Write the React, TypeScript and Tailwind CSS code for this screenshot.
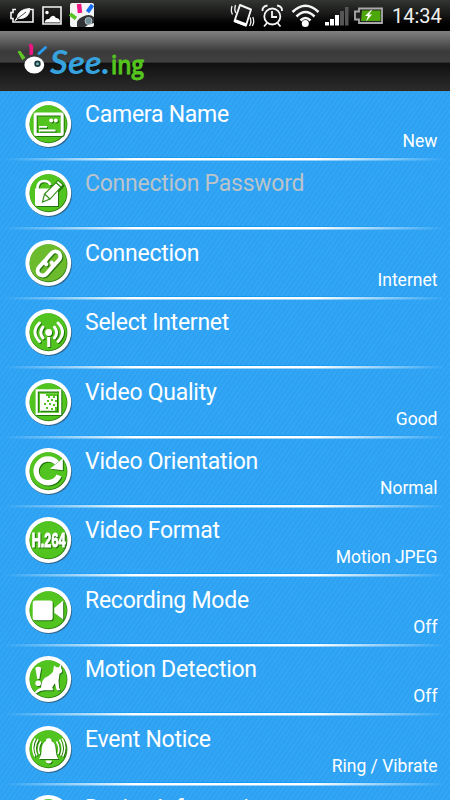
import React from "react";

interface Setting {
  title: string;
  value?: string;
  icon: React.ReactNode;
  disabled?: boolean;
  fill?: string;
}

const GREEN = "#52c41f";

const settings: Setting[] = [
  {
    title: "Camera Name",
    value: "New",
    icon: (
      <>
        <rect x="10.2" y="13" width="27" height="20.5" rx="1" fill="none" stroke="#fff" strokeWidth="3" />
        <circle cx="26.2" cy="19.5" r="2" />
        <circle cx="30.8" cy="19.5" r="2" />
        <path d="M14 25h8v1.7h-8zM14 28.6h16.5v1.8H14z" />
      </>
    ),
  },
  {
    title: "Connection Password",
    disabled: true,
    icon: (
      <>
        <path d="M12.5 19v-2q1-6 6.5-6 5 0 6.5 4" fill="none" stroke="#fff" strokeWidth="2.7" />
        <path d="M10 18.5h23V36H12q-2 0-2-2z" />
        <g stroke="#2f8d12" strokeWidth="1.1">
          <path d="M17.5 32l2-8L31 12.5l5 4.5L25 29z" />
          <path d="M31 12.5l2-2.2 5 4.5-2 2.2z" />
          <path d="M19.5 24l5.5 5" fill="none" />
        </g>
      </>
    ),
  },
  {
    title: "Connection",
    value: "Internet",
    fill: "#6cbb2c",
    icon: (
      <g transform="rotate(-48 24 23.5)" fill="none" stroke="#fff" strokeWidth="4" strokeLinecap="round">
        <path d="M22.5 18.5h-8a5 5 0 0 0 0 10h7q5 0 5-3.5" />
        <path d="M25.5 28.5h8a5 5 0 0 0 0-10h-7q-5 0-5 3.5" />
      </g>
    ),
  },
  {
    title: "Select Internet",
    icon: (
      <>
        <circle cx="23.7" cy="23.5" r="3.4" />
        <path d="M22.2 28h3v10h-3z" />
        <g fill="none" stroke="#fff" strokeWidth="2.9" strokeLinecap="round">
          <path d="M18 18q-4.5 5.5 0 11M29.4 18q4.5 5.5 0 11M14.5 14q-9 9 0 18.5M33 14q9 9 0 18.5" />
        </g>
      </>
    ),
  },
  {
    title: "Video Quality",
    value: "Good",
    icon: (
      <>
        <rect x="11.7" y="11.4" width="23.5" height="23.5" fill="none" stroke="#fff" strokeWidth="2.2" />
        <path d="M15 14.8h17v17H15z" />
        <path
          fill={GREEN}
          d="M21 15h11v2h-2v2h-2v-2h-3v2h-2v-2h-2zM22 21h2v2h-2zM26 20h2v2h-2zM30 21h2v2h-2zM19 24h2v2h-2zM24 24h2v2h-2zM28 25h2v2h-2zM21 28h2v2h-2zM26 29h2v2h-2zM30 28h2v4h-2z"
        />
      </>
    ),
  },
  {
    title: "Video Orientation",
    value: "Normal",
    icon: (
      <>
        <path d="M32 15A11.9 11.9 0 1 0 34 27.5" fill="none" stroke="#fff" strokeWidth="5.4" />
        <path d="M37.8 10.5v11.8L25 20.8z" />
      </>
    ),
  },
  {
    title: "Video Format",
    value: "Motion JPEG",
    icon: (
      <g transform="translate(6.7 29.6) scale(.65 1)">
        <text
          className="font-['Liberation_Sans'] text-[19.5px] font-bold"
          stroke="#fff"
          strokeWidth=".9">
          H.264
        </text>
      </g>
    ),
  },
  {
    title: "Recording Mode",
    value: "Off",
    icon: (
      <>
        <rect x="7.7" y="13.5" width="20" height="19.7" rx="2.5" />
        <path d="M29.3 21l8.9-7.500v19L29.3 26z" />
      </>
    ),
  },
  {
    title: "Motion Detection",
    value: "Off",
    icon: (
      <>
        <path d="M10.3 12q3-2.5 6 0l-2 11h-2z" />
        <circle cx="13.2" cy="27.3" r="2.8" />
        <path d="M29 9.5l2.5 1.8h2.3L36 8.3l.3 4 1 2.7q-.3 2-2.800 2.800-.5 4-1 7l.7 7.200 1.300 2.300h-3.700l-2-7-2.500 4.200 1 2.800H20q-4.500-.3-8.500 3l-1.800-.5q2.300-4 6.500-5-.2-6.500 3.800-10 6.500-3.300 8-6.300z" />
      </>
    ),
  },
  {
    title: "Event Notice",
    value: "Ring / Vibrate",
    icon: (
      <>
        <path d="M21 13.5q2.7-2.5 5.5 0v1.5q4 2 4.2 8 .2 7 2.8 10H14q2.5-3 2.8-10 .2-6 4.2-8zM20.5 34.5h6.5q-.5 3-3.2 3t-3.300-3z" />
        <g fill="none" stroke="#fff" strokeWidth="1.5">
          <path d="M16 15.5q-4 6-1.5 12.5M13 13.5q-5 7.5-1 16M10.3 12.5q-5 8.5-.5 18M31.5 15.5q4 6 1.5 12.5M34.5 13.5q5 7.5 1 16M37.2 12.5q5 8.5.5 18" />
        </g>
      </>
    ),
  },
  { title: "Device Information", icon: <circle cx="23.5" cy="23" r="9" /> },
];

const Badge = ({ children, fill = GREEN }: { children: React.ReactNode; fill?: string }) => (
  <svg viewBox="0 0 48 48" className="mt-2.5 ml-[25px] h-12 w-12 shrink-0">
    <circle cx="24.2" cy="24.3" r="22.8" fill="#32516b" opacity=".75" />
    <circle cx="23.3" cy="23" r="22.9" fill="#fff" />
    <circle cx="23.5" cy="23.4" r="18.9" fill="#28780c" />
    <circle cx="23.2" cy="22.9" r="18.6" fill={fill} />
    <g className="fill-white drop-shadow-[1px_1px_0px_#23740c]">{children}</g>
  </svg>
);

const Row = ({ title, value, icon, disabled, fill }: Setting) => (
  <li className="relative flex h-[69.4px] shrink-0">
    <Badge fill={fill}>{icon}</Badge>
    <div className="flex flex-1 flex-col pt-2 pr-[12.5px] pl-3">
      <h3
        className={`text-[23px] leading-8 tracking-[-0.25px] whitespace-nowrap ${
          disabled ? "text-[#bbc4ca]" : "text-white"
        }`}>
        {title}
      </h3>
      {value && <p className="-mt-px text-right text-[17.5px] leading-[22px]">{value}</p>}
    </div>
    {/* divider */}
    <div className="absolute inset-x-0 -bottom-[0.6px]">
      <div className="h-px bg-linear-to-r from-transparent via-[#0c98f5] to-transparent" />
      <div className="h-[2px] bg-[linear-gradient(90deg,transparent_1%,#fff_30%,#fff_70%,transparent_99%)]" />
      <div className="h-px bg-[linear-gradient(90deg,transparent_1%,#c4e6fd_30%,#c4e6fd_70%,transparent_99%)] opacity-70" />
    </div>
  </li>
);

const Fingers = () => (
  <g fill="none" strokeLinecap="round">
    <path d="M2.5 12l1.5-.5 4.5 6-2 1.5z" fill="#61c728" stroke="#61c728" strokeWidth="1.4" />
    <path d="M14.5 5.5l1 1-.3 7" stroke="#ed1683" strokeWidth="3.6" />
    <path d="M29.5 7.5L23 13.5" stroke="#299af0" strokeWidth="3" />
  </g>
);

const StatusBar = () => (
  <div className="flex h-[31px] items-center bg-linear-to-b from-[#333532] via-[#151615] to-black">
    <svg viewBox="0 0 100 31" className="h-[31px] w-[100px]" fill="none" stroke="#f4f4f4" strokeWidth="1.6">
      <path d="M16 9.5h-3v3h-2v6h2v3.5h20V9.5h-3" />
      <path d="M17 18q1-9 13-9.5-1 11-12 10l-3 2z" fill="#fff" strokeWidth="1" />
      <path d="M17 19l9-7" stroke="#222" strokeWidth=".8" />
      <path d="M43 7h18v17H43z" />
      <circle cx="47" cy="12.5" r="1.7" fill="#fff" stroke="none" />
      <path d="M44.5 22.5q1-4 4.5-3.5 4-6 7-1 4 0 4 4.5z" fill="#fff" stroke="none" />
      <rect x="70" y="3" width="24" height="24" rx="2" fill="#f4f4f4" stroke="none" />
      <path d="M77 27q-1-8 5-10 7-4 12 0v6q-6 1-9 4z" fill="#303235" stroke="none" />
      <circle cx="88.5" cy="21" r="3.5" fill="#6f8e95" stroke="#b2c0c4" strokeWidth="1" />
      <path d="M79 4l1 9" stroke="#ed1683" strokeWidth="4.5" />
      <path d="M92.5 5l-5 7" stroke="#176cf0" strokeWidth="4" />
      <path d="M70 14l6 4.5" stroke="#5ac426" strokeWidth="4" />
    </svg>
    <svg viewBox="0 0 163 31" className="ml-auto h-[31px] w-[163px]" fill="none" stroke="#f5f5f5" strokeWidth="1.8">
      <path d="M16 5l11 4.5L22 25.5l-11.5-4.5z" strokeWidth="1.9" strokeLinejoin="round" />
      <path d="M11 19l12 4.5-1 3L10 22z" fill="#fff" stroke="none" />
      <path d="M8 6q-1.5 5 .5 8.5M11.5 5q-1.5 5 .5 8M26 17.5q2 4-.5 8.5M28.8 17q2 5-.5 9" strokeWidth="1.3" />
      <circle cx="48.3" cy="16.5" r="8" />
      <path d="M48 11v6h5M43 23l-3 3.5M53.5 23l3 3.5M38.5 11q-.5-4.5 5-5.5M58 11q.5-4.5-5-5.5" />
      <g strokeWidth="2.5">
        <path d="M68.5 12q13-12.5 26 0M72.5 16.5q9-9 18 0M76.5 20.5q5-5 10 0" />
      </g>
      <circle cx="81.3" cy="23.5" r="3.5" fill="#fff" stroke="none" />
      <path d="M101 22h4v3.5h-4zM106 19h4v6.5h-4zM111 15h4v10.5h-4z" fill="#fff" stroke="none" />
      <path d="M116 11h4v14.5h-4zM121 7h3.5v18.5H121z" fill="#555" stroke="none" />
      <path d="M135 8.5h23v14.5h-23v-3.5h-4v-8h4z" fill="#222" stroke="#aaa" />
      <path d="M138 10.5h18.5v10.5H137z" fill="#4da70b" stroke="none" />
      <path d="M147 10l-6 6h3l-2 5.5 6-7h-3l3-4.5z" fill="#fff" stroke="none" />
    </svg>
    <span className="w-[63px] pt-0.5 pl-[5px] text-[20px] leading-[29px] text-[#f1f1f1]">14:34</span>
  </div>
);

const Header = () => (
  <header className="flex h-[60px] border-b border-[#332519] bg-[linear-gradient(#818181_0%,#3a3a3a_35%,#404040_53%,#101010_54%,#2b2b2b_100%)]">
    <svg viewBox="0 0 150 60" className="h-[60px] w-[150px]">
      <g transform="translate(16 9)">
        <Fingers />
      </g>
      <ellipse cx="34.3" cy="34" rx="9.9" ry="8.6" fill="#fff" />
      <circle cx="37.5" cy="32.7" r="3.2" fill="#173b40" />
      <circle cx="37.5" cy="32.7" r="1.5" fill="#82afae" />
      <text
        x="50"
        y="42.5"
        textLength="60"
        lengthAdjust="spacingAndGlyphs"
        className="fill-[#36a3df] font-['Lato'] text-[32px] font-bold italic">
        See.
      </text>
      <text
        x="111"
        y="42.5"
        textLength="33"
        lengthAdjust="spacingAndGlyphs"
        className="fill-[#55c51e] stroke-[#55c51e] stroke-[0.8] font-['Open_Sans'] text-[25px] font-semibold">
        ing
      </text>
    </svg>
  </header>
);

const App = () => {
  return (
    <div className="flex h-[800px] w-[450px] flex-col overflow-hidden font-['Roboto',sans-serif] text-white">
      <StatusBar />
      <Header />
      <ul className="flex min-h-0 flex-1 flex-col overflow-hidden bg-[repeating-linear-gradient(125deg,#34a8f7_0px,#2c9ff0_2px,#34a8f7_4px)]">
        {settings.map((item) => (
          <Row key={item.title} {...item} />
        ))}
      </ul>
    </div>
  );
};

export default App;
